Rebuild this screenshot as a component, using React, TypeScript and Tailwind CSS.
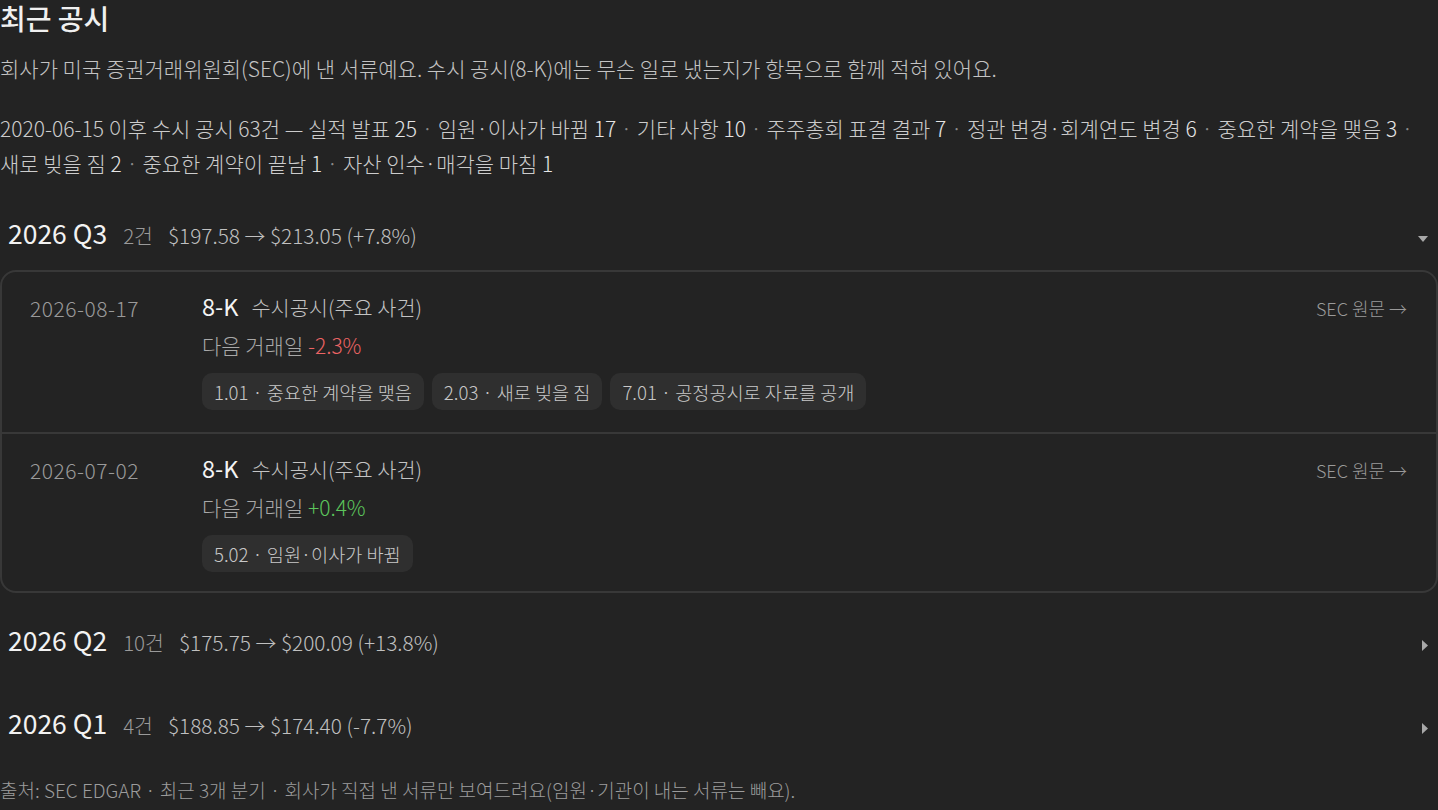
import React from "react";

const font = { fontFamily: '"Noto Sans CJK KR", "Noto Sans", sans-serif' };

type Filing = {
  date: string;
  change: string;
  up: boolean;
  items: string[];
};

const q3: Filing[] = [
  {
    date: "2026-08-17",
    change: "-2.3%",
    up: false,
    items: ["1.01 · 중요한 계약을 맺음", "2.03 · 새로 빚을 짐", "7.01 · 공정공시로 자료를 공개"],
  },
  {
    date: "2026-07-02",
    change: "+0.4%",
    up: true,
    items: ["5.02 · 임원·이사가 바뀜"],
  },
];

const stats: [string, string][] = [
  ["실적 발표", "25"],
  ["임원·이사가 바뀜", "17"],
  ["기타 사항", "10"],
  ["주주총회 표결 결과", "7"],
  ["정관 변경·회계연도 변경", "6"],
  ["중요한 계약을 맺음", "3"],
  ["새로 빚을 짐", "2"],
  ["중요한 계약이 끝남", "1"],
  ["자산 인수·매각을 마침", "1"],
];

function DownTri() {
  return (
    <svg width="10" height="6" viewBox="0 0 10 6" className="block mt-[10px]">
      <path d="M0 0 L10 0 L5 6 Z" fill="#a8a8a8" />
    </svg>
  );
}

function RightTri() {
  return (
    <svg width="6" height="11" viewBox="0 0 6 11" className="block mt-[9px]">
      <path d="M0 0 L6 5.5 L0 11 Z" fill="#a8a8a8" />
    </svg>
  );
}

function QuarterHeader({
  q,
  count,
  range,
  open,
}: {
  q: string;
  count: string;
  range: string;
  open: boolean;
}) {
  return (
    <div className="flex items-center h-[68px] pb-[5px] pl-[8px] pr-[10px]">
      <div className="flex items-baseline flex-1">
        <span className="text-[26.5px] font-normal text-[#f2f2f2] leading-[36px]">{q}</span>
        <span className="ml-[16px] text-[20.5px] font-light text-[#9a9a9a]">{count}</span>
        <span className="ml-[15px] text-[20.8px] font-light text-[#c0c0c0]">{range}</span>
      </div>
      {open ? <DownTri /> : <RightTri />}
    </div>
  );
}

function Row({ f, last }: { f: Filing; last: boolean }) {
  return (
    <div
      className={
        "flex pl-[28px] pr-[29px] pt-[22px] " +
        (last ? "pb-[19px]" : "pb-[22px] border-b-[2px] border-[#383838]")
      }
    >
      <div className="w-[172px] shrink-0 h-[28px] text-[21px] tracking-[0.5px] font-light leading-[28px] text-[#9a9a9a]">
        {f.date}
      </div>
      <div className="flex-1 -mt-[2px]">
        <div className="flex items-baseline h-[28px] leading-[28px]">
          <span className="text-[23.5px] font-normal text-[#f4f4f4] leading-[28px]">8-K</span>
          <span className="ml-[13px] text-[20.8px] font-light text-[#c4c4c4] leading-[28px]">수시공시(주요 사건)</span>
        </div>
        <div className="mt-[11px] h-[28px] text-[21px] font-light leading-[28px] text-[#a8a8a8]">
          다음 거래일{" "}
          <span className={f.up ? "text-[#5cc65c]" : "text-[#ec6464]"}>{f.change}</span>
        </div>
        <div className="mt-[14px] flex flex-wrap gap-[8px]">
          {f.items.map((it) => (
            <span
              key={it}
              className="h-[37px] px-[12px] flex items-center rounded-[10px] bg-[#2f2f2f] text-[18.6px] font-light text-[#c8c8c8]"
            >
              {it}
            </span>
          ))}
        </div>
      </div>
      <div className="h-[28px] text-[18px] font-light leading-[28px] text-[#9a9a9a]">SEC 원문 →</div>
    </div>
  );
}

export default function App() {
  return (
    <div className="min-h-screen bg-[#232323] text-[#cccccc]" style={font}>
      <h2 className="text-[28px] font-medium leading-[36px] text-[#f0f0f0]">최근 공시</h2>
      <p className="mt-[15px] text-[21px] font-light leading-[35px] text-[#c4c4c4]">
        회사가 미국 증권거래위원회(SEC)에 낸 서류예요. 수시 공시(8-K)에는 무슨 일로 냈는지가 항목으로 함께 적혀 있어요.
      </p>
      <p className="mt-[25px] text-[21px] font-light leading-[35px] text-[#cccccc] break-keep">
        2020-06-15 이후 수시 공시 63건 — {" "}
        {stats.map(([k, v], i) => (
          <React.Fragment key={k}>
            {k} <span className="text-[#e6e6e6]">{v}</span>
            {i < stats.length - 1 ? <span className="text-[#8a8a8a]"> · </span> : null}
          </React.Fragment>
        ))}
      </p>

      <div className="mt-[21px]">
        <QuarterHeader q="2026 Q3" count="2건" range="$197.58 → $213.05 (+7.8%)" open />
        <div className="rounded-[16px] border-[2px] border-[#383838] overflow-hidden">
          {q3.map((f, i) => (
            <Row key={f.date} f={f} last={i === q3.length - 1} />
          ))}
        </div>
      </div>

      <div className="mt-[16px]">
        <QuarterHeader q="2026 Q2" count="10건" range="$175.75 → $200.09 (+13.8%)" open={false} />
      </div>
      <div className="mt-[15px]">
        <QuarterHeader q="2026 Q1" count="4건" range="$188.85 → $174.40 (-7.7%)" open={false} />
      </div>

      <p className="mt-[16px] text-[19px] font-light leading-[28px] text-[#9c9c9c]">
        출처: SEC EDGAR · 최근 3개 분기 · 회사가 직접 낸 서류만 보여드려요(임원·기관이 내는 서류는 빼요).
      </p>
    </div>
  );
}
